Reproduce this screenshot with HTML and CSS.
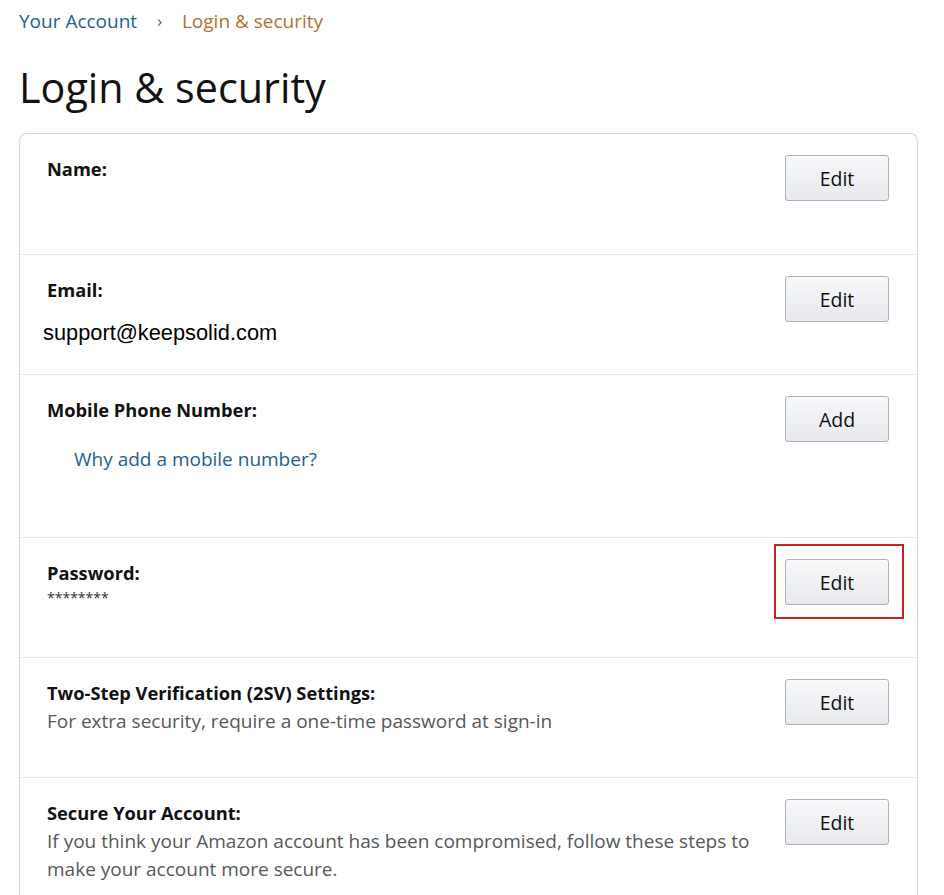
FILE: index.html
```html
<!DOCTYPE html>
<html lang="en">
<head>
<meta charset="utf-8">
<title>Login &amp; security</title>
<link rel="stylesheet" href="styles.css">
</head>
<body>
<div class="page">
  <nav class="crumbs">
    <a class="crumb-link" href="#">Your Account</a>
    <span class="crumb-sep">›</span>
    <span class="crumb-current">Login &amp; security</span>
  </nav>
  <h1 class="title">Login &amp; security</h1>
  <div class="card">
    <div class="row">
      <div class="info">
        <div class="label">Name:</div>
      </div>
      <div class="action"><button class="btn">Edit</button></div>
    </div>
    <div class="row">
      <div class="info">
        <div class="label">Email:</div>
        <div class="email">support@keepsolid.com</div>
      </div>
      <div class="action"><button class="btn">Edit</button></div>
    </div>
    <div class="row row-tall">
      <div class="info">
        <div class="label">Mobile Phone Number:</div>
        <a class="why" href="#">Why add a mobile number?</a>
      </div>
      <div class="action"><button class="btn">Add</button></div>
    </div>
    <div class="row">
      <div class="info">
        <div class="label">Password:</div>
        <div class="stars">********</div>
      </div>
      <div class="action action-marked"><button class="btn">Edit</button></div>
    </div>
    <div class="row">
      <div class="info">
        <div class="label">Two-Step Verification (2SV) Settings:</div>
        <div class="desc">For extra security, require a one-time password at sign-in</div>
      </div>
      <div class="action"><button class="btn">Edit</button></div>
    </div>
    <div class="row">
      <div class="info">
        <div class="label">Secure Your Account:</div>
        <div class="desc">If you think your Amazon account has been compromised, follow these steps to make your account more secure.</div>
      </div>
      <div class="action"><button class="btn">Edit</button></div>
    </div>
  </div>
</div>
</body>
</html>
```

FILE: styles.css
```css
html, body {
  margin: 0;
  padding: 0;
  background: #fff;
}
body {
  font-family: "Open Sans", "Noto Sans", sans-serif;
  color: #111;
  overflow: hidden;
}
.page {
  padding: 0 26px 0 19px;
}
.crumbs {
  display: flex;
  align-items: center;
  height: 42px;
  font-size: 19px;
  line-height: 24px;
}
.crumb-link {
  color: #23618f;
  text-decoration: none;
}
.crumb-sep {
  color: #555;
  font-size: 16px;
  margin: 0 20px 0 20px;
}
.crumb-current {
  color: #b0712f;
}
.title {
  margin: 17px 0 0;
  font-size: 41.3px;
  line-height: 56px;
  font-weight: 400;
  color: #111;
  height: 74px;
}
.card {
  border: 1px solid #d8d8d8;
  border-radius: 8px;
  border-bottom: none;
  border-bottom-left-radius: 0;
  border-bottom-right-radius: 0;
}
.row {
  display: flex;
  height: 120px;
  padding: 21px 28px 0 27px;
  box-sizing: border-box;
  border-bottom: 1px solid #e6e6e6;
}
.row:first-child {
  height: 121px;
}
.row-tall {
  height: 163px;
}
.row:last-child {
  border-bottom: none;
}
.info {
  flex: 1;
  min-width: 0;
  padding-right: 28px;
}
.label {
  font-size: 18.3px;
  font-weight: 700;
  line-height: 28px;
  color: #111;
}
.email {
  font-family: "Liberation Sans", Arial, sans-serif;
  font-size: 21.8px;
  line-height: 28px;
  color: #000;
  margin: 15px 0 0 -4px;
}
.why {
  display: block;
  font-size: 19px;
  line-height: 28px;
  color: #23618f;
  text-decoration: none;
  margin: 21px 0 0 27px;
}
.stars {
  font-size: 14px;
  line-height: 18px;
  color: #333;
  margin-top: 2px;
}
.desc {
  font-size: 19px;
  line-height: 28px;
  color: #565959;
}
.action {
  flex: none;
  position: relative;
  width: 104px;
}
.action-marked::after {
  content: "";
  position: absolute;
  left: -11px;
  top: -15px;
  width: 126px;
  height: 71px;
  border: 2px solid #cc2020;
}
.btn {
  display: block;
  width: 104px;
  height: 46px;
  margin-top: 0;
  border: 1px solid #adb1b8;
  border-radius: 3px;
  background: linear-gradient(#f7f8fa, #e7e9ec);
  box-shadow: inset 0 1px 0 rgba(255,255,255,.6);
  font-family: "Open Sans", "Noto Sans", sans-serif;
  font-size: 19.5px;
  color: #111;
  padding: 0;
}
```
